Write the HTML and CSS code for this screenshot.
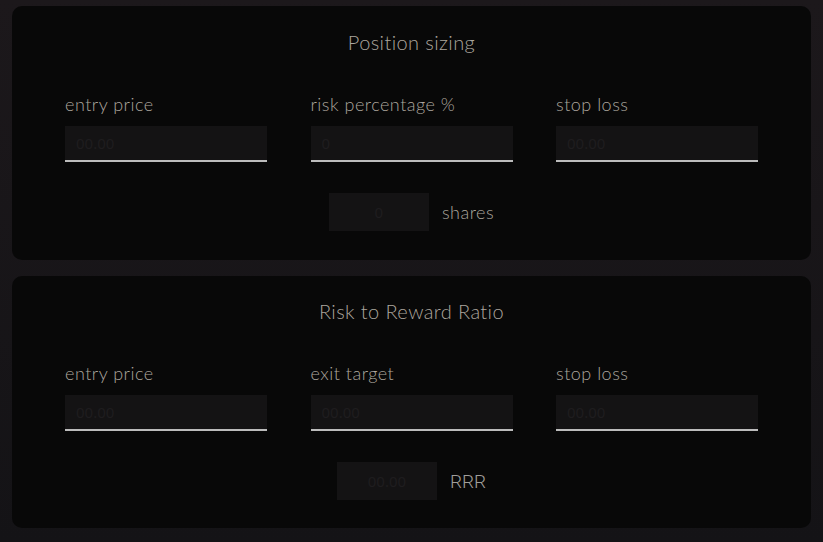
FILE: index.html
```html
<!DOCTYPE html>
<html>
<head>
<meta charset="utf-8">
<link rel="stylesheet" href="styles.css">
</head>
<body>
<main class="page">
  <section class="card">
    <h2 class="title">Position sizing</h2>
    <div class="fields">
      <label class="field"><span class="label">entry price</span><input class="inp" placeholder="00.00"></label>
      <label class="field"><span class="label">risk percentage %</span><input class="inp" placeholder="0"></label>
      <label class="field"><span class="label">stop loss</span><input class="inp" placeholder="00.00"></label>
    </div>
    <div class="result">
      <input class="out" placeholder="0">
      <span class="unit">shares</span>
    </div>
  </section>
  <section class="card card-rrr">
    <h2 class="title">Risk to Reward Ratio</h2>
    <div class="fields">
      <label class="field"><span class="label">entry price</span><input class="inp" placeholder="00.00"></label>
      <label class="field"><span class="label">exit target</span><input class="inp" placeholder="00.00"></label>
      <label class="field"><span class="label">stop loss</span><input class="inp" placeholder="00.00"></label>
    </div>
    <div class="result">
      <input class="out" placeholder="00.00">
      <span class="unit unit-alt">RRR</span>
    </div>
  </section>
</main>
</body>
</html>
```
FILE: styles.css
```css
* { box-sizing: border-box; }
html, body { margin: 0; height: 100%; }
body {
  background: linear-gradient(#1c181b, #141316);
  font-family: Lato, "Noto Sans", sans-serif;
  color: #aca69e;
}
.page {
  padding: 6px 12px 0 12px;
  display: flex;
  flex-direction: column;
  gap: 16px;
  width: 823px;
}
.card {
  background: #080808;
  border-radius: 10px;
  height: 254px;
  padding: 24px 53px 0 53px;
  display: flex;
  flex-direction: column;
  align-items: stretch;
}
.card-rrr {
  height: 252px;
  padding-top: 23px;
}
.title {
  margin: 0;
  font-weight: 300;
  font-size: 20px;
  line-height: 24px;
  text-align: center;
  letter-spacing: 0.4px;
}
.fields {
  margin-top: 39px;
  display: grid;
  grid-template-columns: 202px 202px 202px;
  justify-content: space-between;
}
.field { display: flex; flex-direction: column; }
.label {
  font-size: 18px;
  font-weight: 300;
  line-height: 22px;
  letter-spacing: 0.5px;
  margin-bottom: 11px;
}
.inp, .out {
  background: #141314;
  border: none;
  outline: none;
  color: #aca69e;
  font-family: "Segoe UI", "Noto Sans", sans-serif;
  font-size: 15px;
}
.inp {
  height: 36px;
  border-bottom: 2px solid #bcbcbc;
  padding: 0 11px;
}
.inp::placeholder, .out::placeholder { color: #1f1d1f; }
.result {
  margin-top: 31px;
  display: flex;
  justify-content: center;
  align-items: center;
  gap: 13px;
}
.out {
  width: 100px;
  height: 38px;
  text-align: center;
}
.unit {
  font-size: 18px;
  font-weight: 300;
  letter-spacing: 0.5px;
}
.unit-alt {
  font-family: Roboto, "Liberation Sans", sans-serif;
  font-weight: 300;
  font-size: 19px;
  letter-spacing: 0;
  color: #a09e9a;
}
```
